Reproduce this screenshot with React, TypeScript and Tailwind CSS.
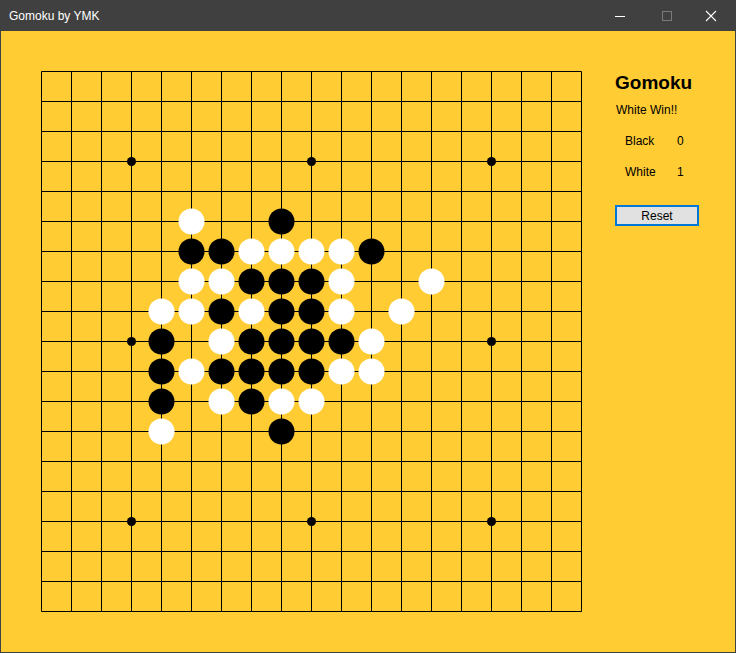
import React from 'react'

type Stone = [number, number, 'b' | 'w']

// board coordinates (col, row) from the reference
const stones: Stone[] = [
  [5, 5, 'w'], [8, 5, 'b'],
  [5, 6, 'b'], [6, 6, 'b'], [7, 6, 'w'], [8, 6, 'w'], [9, 6, 'w'], [10, 6, 'w'], [11, 6, 'b'],
  [5, 7, 'w'], [6, 7, 'w'], [7, 7, 'b'], [8, 7, 'b'], [9, 7, 'b'], [10, 7, 'w'], [13, 7, 'w'],
  [4, 8, 'w'], [5, 8, 'w'], [6, 8, 'b'], [7, 8, 'w'], [8, 8, 'b'], [9, 8, 'b'], [10, 8, 'w'], [12, 8, 'w'],
  [4, 9, 'b'], [6, 9, 'w'], [7, 9, 'b'], [8, 9, 'b'], [9, 9, 'b'], [10, 9, 'b'], [11, 9, 'w'],
  [4, 10, 'b'], [5, 10, 'w'], [6, 10, 'b'], [7, 10, 'b'], [8, 10, 'b'], [9, 10, 'b'], [10, 10, 'w'], [11, 10, 'w'],
  [4, 11, 'b'], [6, 11, 'w'], [7, 11, 'b'], [8, 11, 'w'], [9, 11, 'w'],
  [4, 12, 'w'], [8, 12, 'b'],
]

const starPoints = [3, 9, 15]
const lines = Array.from({ length: 19 }, (_, i) => i)

function Board() {
  const p = (i: number) => 1.5 + i * 30
  return (
    <svg width={543} height={543} className="block shrink-0">
      {lines.map(i => (
        <g key={i}>
          <line x1={p(i)} y1={p(0)} x2={p(i)} y2={p(18)} stroke="#000" strokeWidth={1} />
          <line x1={p(0)} y1={p(i)} x2={p(18)} y2={p(i)} stroke="#000" strokeWidth={1} />
        </g>
      ))}
      {starPoints.map(x =>
        starPoints.map(y => <circle key={`${x}-${y}`} cx={p(x)} cy={p(y)} r={4.5} fill="#000" />)
      )}
      {stones.map(([x, y, c]) => (
        <circle key={`${x}-${y}`} cx={p(x)} cy={p(y)} r={13} fill={c === 'b' ? '#000' : '#fff'} />
      ))}
    </svg>
  )
}

export default function App() {
  return (
    <div className="w-[736px] h-[653px] flex flex-col bg-[#404040] font-['Liberation_Sans',sans-serif]">
      {/* Title bar */}
      <div className="h-[31px] flex items-center text-white text-[12px] shrink-0">
        <span className="pl-[9px] flex-1">Gomoku by YMK</span>
        <svg width={12} height={12} className="mr-[35px]" viewBox="0 0 12 12">
          <line x1={1} y1={6.5} x2={11} y2={6.5} stroke="#fff" strokeWidth={1} />
        </svg>
        <svg width={12} height={12} className="mr-[32px]" viewBox="0 0 12 12">
          <rect x={1.5} y={1.5} width={9} height={9} fill="none" stroke="#7a7a7a" strokeWidth={1} />
        </svg>
        <svg width={12} height={12} className="mr-[19px]" viewBox="0 0 12 12">
          <path d="M1 1L11 11M11 1L1 11" stroke="#fff" strokeWidth={1.1} />
        </svg>
      </div>

      {/* Content */}
      <div className="flex-1 mx-px mb-px bg-[#ffcc33] flex pl-[39px] pt-[39px]">
        <Board />
        <div className="ml-[32px] pt-[1px] text-black flex flex-col">
          <h1 className="text-[19px] font-bold leading-[24px] font-['Liberation_Sans',sans-serif]">Gomoku</h1>
          <p className="text-[12px] mt-[8px] ml-px leading-[14px]">White Win!!</p>
          <div className="flex text-[12px] ml-[10px] mt-[17px] leading-[14px]">
            <span className="w-[52px]">Black</span>
            <span>0</span>
          </div>
          <div className="flex text-[12px] ml-[10px] mt-[17px] leading-[14px]">
            <span className="w-[52px]">White</span>
            <span>1</span>
          </div>
          <button className="mt-[26px] w-[84px] h-[21px] border-2 border-[#0078d7] bg-[#e1e1e1] text-[12px] leading-none text-black">
            Reset
          </button>
        </div>
      </div>
    </div>
  )
}
